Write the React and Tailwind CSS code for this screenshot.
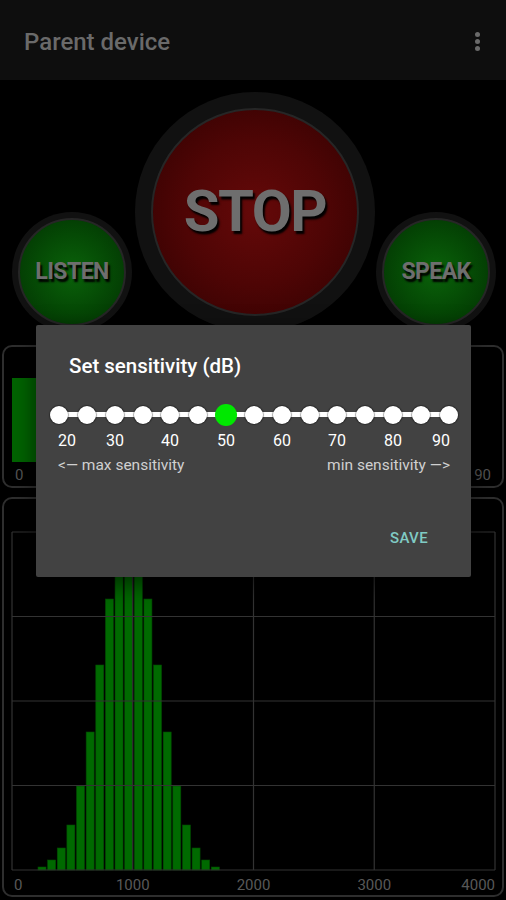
import React from 'react'

const BARS = [3, 10, 22, 45, 84, 138, 205, 271, 305, 325, 305, 271, 205, 138, 84, 45, 22, 10, 3]
const DOTS = Array.from({ length: 15 }, (_, i) => i)
const ACTIVE = 6
const TICKS = [
  { label: '20', x: 9 },
  { label: '30', x: 57 },
  { label: '40', x: 112 },
  { label: '50', x: 168 },
  { label: '60', x: 224 },
  { label: '70', x: 279 },
  { label: '80', x: 335 },
  { label: '90', x: 383 },
]

function RoundButton({ size, label, textSize, red }) {
  const inner = red
    ? 'bg-[radial-gradient(circle,#650909_0%,#4e0505_50%,#300101_100%)]'
    : 'bg-[radial-gradient(circle,#0a620a_0%,#054a05_50%,#023002_100%)]'
  return (
    <div
      className="rounded-full flex items-center justify-center bg-[radial-gradient(circle,#111_84%,#2c2c2c_90%,#1a1a1a_96%,#000_100%)]"
      style={{ width: size, height: size }}
    >
      <div
        className={`rounded-full flex items-center justify-center border-2 border-[#262626] ${inner} ${
          red ? 'w-[87%] h-[87%]' : 'w-[90%] h-[90%]'
        }`}
      >
        <span
          className={`font-bold text-[#6e6e6e] tracking-tight [text-shadow:2px_3px_2px_#000] ${textSize}`}
        >
          {label}
        </span>
      </div>
    </div>
  )
}

function Chart() {
  const left = 8
  const right = 491
  const top = 33
  const bottom = 371
  const xs = [0, 1, 2, 3, 4].map((k) => left + k * ((right - left) / 4))
  const ys = [0, 1, 2, 3, 4].map((k) => top + k * ((bottom - top) / 4))
  return (
    <svg width="498" height="396" className="block overflow-visible">
      {BARS.map((h, i) => (
        <rect
          key={i}
          x={34 + i * 9.63}
          y={bottom - h}
          width="8"
          height={h}
          fill="#006a00"
          stroke="#004a00"
          strokeWidth="0.6"
        />
      ))}
      {xs.map((x) => (
        <line key={x} x1={x} y1={top} x2={x} y2={bottom} stroke="#333" strokeWidth="1.2" />
      ))}
      {ys.map((y) => (
        <line key={y} x1={left} y1={y} x2={right} y2={y} stroke="#333" strokeWidth="1.2" />
      ))}
      <g fill="#585858" fontSize="15" fontFamily="Roboto, sans-serif">
        <text x="10" y="391">0</text>
        <text x={xs[1]} y="391" textAnchor="middle">1000</text>
        <text x={xs[2]} y="391" textAnchor="middle">2000</text>
        <text x={xs[3]} y="391" textAnchor="middle">3000</text>
        <text x={right} y="391" textAnchor="end">4000</text>
      </g>
    </svg>
  )
}

function SensitivityDialog() {
  return (
    <div className="absolute left-[36px] top-[325px] w-[435px] h-[252px] bg-[#424242] rounded-[2px] shadow-[0_8px_24px_rgba(0,0,0,0.6)]">
      <div className="pl-[33px] pt-[31px] text-[20.5px] font-medium text-white leading-none">
        Set sensitivity (dB)
      </div>

      <div className="relative ml-[14px] mr-[13px] mt-[27px] h-[22px] flex items-center">
        <div className="absolute left-[2px] right-[2px] h-[5px] bg-white" />
        <div className="relative w-full flex justify-between">
          {DOTS.map((i) =>
            i === ACTIVE ? (
              <div key={i} className="w-[18px] h-[18px] flex items-center justify-center">
                <span className="w-[22px] h-[22px] shrink-0 rounded-full bg-[#00e800]" />
              </div>
            ) : (
              <span
                key={i}
                className="w-[18px] h-[18px] rounded-full bg-white shadow-[0_0_1px_1px_rgba(0,0,0,0.35)]"
              />
            )
          )}
        </div>
      </div>

      <div className="relative mx-[22px] mt-[5px] h-[20px]">
        {TICKS.map((t) => (
          <span
            key={t.label}
            className="absolute top-0 -translate-x-1/2 text-[16px] text-white leading-[20px]"
            style={{ left: t.x }}
          >
            {t.label}
          </span>
        ))}
      </div>

      <div className="flex justify-between pl-[22px] pr-[21px] mt-[4px] text-[15.5px] text-[#d0d0d0] leading-[20px]">
        <span>&lt;— max sensitivity</span>
        <span>min sensitivity —&gt;</span>
      </div>

      <div className="flex justify-end pr-[43px] mt-[52px]">
        <span className="text-[15px] font-medium text-[#80cbc4] tracking-wide">SAVE</span>
      </div>
    </div>
  )
}

export default function App() {
  return (
    <div className="relative w-[506px] h-[900px] bg-black overflow-hidden font-['Roboto',sans-serif]">
      <header className="h-[80px] bg-[#0e0e0e] flex items-center justify-between pt-[3px] pl-[24px] pr-[26px]">
        <h1 className="text-[24px] font-medium text-[#6a6a6a] leading-none">Parent device</h1>
        <div className="flex flex-col gap-[2px]">
          <span className="w-[5px] h-[5px] rounded-full bg-[#6a6a6a]" />
          <span className="w-[5px] h-[5px] rounded-full bg-[#6a6a6a]" />
          <span className="w-[5px] h-[5px] rounded-full bg-[#6a6a6a]" />
        </div>
      </header>

      <div className="flex items-end pt-[10px] pl-[12px] h-[252px]">
        <RoundButton size={120} label="LISTEN" textSize="text-[23px]" />
        <div className="ml-[3px]">
          <RoundButton size={240} label="STOP" textSize="text-[58px]" red />
        </div>
        <div className="ml-[1px]">
          <RoundButton size={120} label="SPEAK" textSize="text-[23px]" />
        </div>
      </div>

      <div className="mx-[2px] mt-[13px] h-[143px] border-2 border-[#2e2e2e] rounded-[10px] px-[8px] pt-[31px]">
        <div className="w-[24px] h-[84px] bg-[#006400]" />
        <div className="flex justify-between items-center mt-[3px] px-[3px] text-[15px] text-[#555] leading-[20px]">
          <span>0</span>
          <span>90</span>
        </div>
      </div>

      <div className="mx-[2px] mt-[9px] h-[400px] border-2 border-[#2e2e2e] rounded-[10px]">
        <Chart />
      </div>

      <SensitivityDialog />
    </div>
  )
}
